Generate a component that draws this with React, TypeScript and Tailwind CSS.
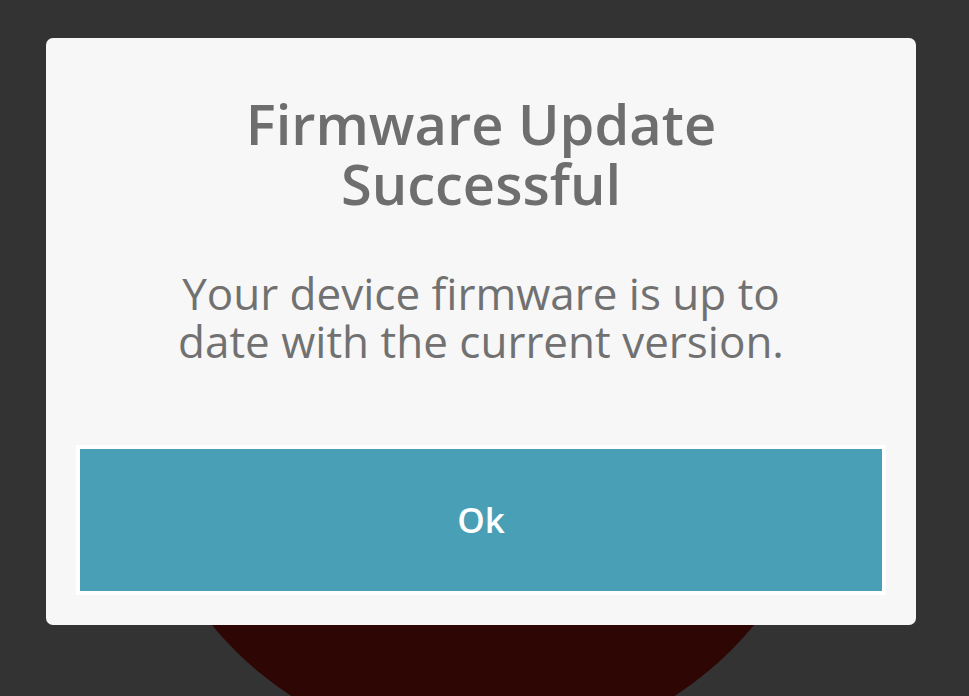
export default function App() {
  return (
    <div className="relative h-[696px] w-[969px] overflow-hidden bg-[#333333] font-['Open_Sans','Lato',sans-serif]">
      {/* dark red dial behind the dialog */}
      <div className="absolute left-[132px] top-[51px] h-[702px] w-[702px] rounded-full bg-[#2e0705]" />

      <div className="relative ml-[46px] mt-[38px] flex h-[587px] w-[870px] flex-col rounded-[7px] bg-[#f7f7f7] px-[30px] pb-[30px] pt-[55px]">
        <h1 className="text-center text-[56px] font-semibold leading-[60px] text-[#6e6e6e]">
          Firmware Update
          <br />
          Successful
        </h1>
        <p className="mt-[56px] text-center text-[44px] leading-[48px] text-[#717171]">
          Your device firmware is up to
          <br />
          date with the current version.
        </p>
        <button className="mt-auto flex h-[150px] w-full items-center justify-center border-4 border-white bg-[#499fb5] text-[35px] font-semibold text-white">
          Ok
        </button>
      </div>
    </div>
  )
}
